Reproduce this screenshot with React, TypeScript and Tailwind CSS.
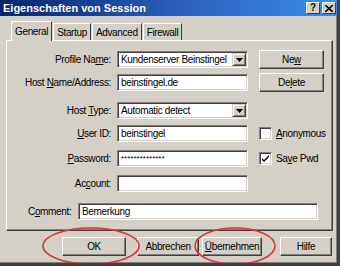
import React from "react";

const font = { fontFamily: '"Liberation Sans", Arial, sans-serif' };

function U({ children }: { children: React.ReactNode }) {
  return <span className="underline underline-offset-1">{children}</span>;
}

function Field({ value, className = "" }: { value?: string; className?: string }) {
  return (
    <div
      className={`h-[17px] bg-white border border-t-[#808080] border-l-[#808080] border-b-white border-r-white shadow-[inset_1px_1px_0_#404040,inset_-1px_-1px_0_#d4d0c8] pl-[3px] leading-[15px] text-black whitespace-nowrap overflow-hidden ${className}`}
    >
      {value}
    </div>
  );
}

function Combo({ value }: { value: string }) {
  return (
    <div className="flex h-[17px] w-[131px] bg-white border border-t-[#808080] border-l-[#808080] border-b-white border-r-white shadow-[inset_1px_1px_0_#404040,inset_-1px_-1px_0_#d4d0c8]">
      <div className="flex-1 pl-[3px] leading-[15px] whitespace-nowrap overflow-hidden">{value}</div>
      <div className="w-[14px] h-[13px] mt-[1px] mr-[1px] flex items-center justify-center bg-[#d4d0c8] border border-t-[#d4d0c8] border-l-[#d4d0c8] border-b-[#404040] border-r-[#404040] shadow-[inset_1px_1px_0_#fff,inset_-1px_-1px_0_#808080]">
        <svg width="7" height="4" viewBox="0 0 7 4">
          <path d="M0 0h7L3.5 4z" fill="#000" />
        </svg>
      </div>
    </div>
  );
}

function Btn({ children, className = "" }: { children: React.ReactNode; className?: string }) {
  return (
    <div
      className={`flex items-center justify-center bg-[#d4d0c8] border border-t-white border-l-white border-b-[#404040] border-r-[#404040] shadow-[inset_-1px_-1px_0_#808080] text-black ${className}`}
    >
      {children}
    </div>
  );
}

function Check({ checked, children }: { checked?: boolean; children: React.ReactNode }) {
  return (
    <div className="flex items-center gap-[4px]">
      <div className="w-[13px] h-[13px] bg-white border border-t-[#808080] border-l-[#808080] border-b-white border-r-white shadow-[inset_1px_1px_0_#404040,inset_-1px_-1px_0_#d4d0c8] flex items-center justify-center">
        {checked && (
          <svg width="9" height="9" viewBox="0 0 9 9">
            <path d="M1 4l2 2 5-5v2l-5 5-2-2z" fill="#000" />
          </svg>
        )}
      </div>
      <span>{children}</span>
    </div>
  );
}

function Row({
  label,
  children,
  right,
  className = "",
}: {
  label: React.ReactNode;
  children: React.ReactNode;
  right?: React.ReactNode;
  className?: string;
}) {
  return (
    <div className={`flex items-center ${className}`}>
      <div className="w-[110px] text-right pr-[6px] whitespace-nowrap">{label}</div>
      {children}
      <div className="ml-[11px]">{right}</div>
    </div>
  );
}

export default function App() {
  return (
    <div
      style={font}
      className="relative w-[340px] h-[266px] overflow-hidden bg-[#d4d0c8] text-black text-[10px] tracking-[-0.35px] border-r-[3px] border-b-[3px] border-r-[#404040] border-b-[#404040] shadow-[inset_-1px_-1px_0_#808080]"
    >
      <div className="h-[16px] flex items-center justify-between bg-gradient-to-r from-[#0a246a] via-[#2a5cb8] to-[#3a8ee6] pl-[3px] pr-[1px]">
        <span className="text-white font-bold text-[11px] tracking-[0px]">Eigenschaften von Session</span>
        <div className="flex gap-[2px]">
          <div className="w-[14px] h-[12px] flex items-center justify-center bg-[#d4d0c8] border border-t-white border-l-white border-b-[#404040] border-r-[#404040] text-[10px] font-bold leading-none">
            ?
          </div>
          <div className="w-[14px] h-[12px] flex items-center justify-center bg-[#d4d0c8] border border-t-white border-l-white border-b-[#404040] border-r-[#404040]">
            <svg width="8" height="7" viewBox="0 0 8 7">
              <path d="M0 0l8 7M8 0L0 7" stroke="#000" strokeWidth="1.6" />
            </svg>
          </div>
        </div>
      </div>

      <div className="pl-[6px] pr-[4px] pt-[4px]">
        <div className="flex items-end pl-[5px] h-[20px]">
          <div className="h-[20px] px-[3px] flex items-center bg-[#d4d0c8] border-t border-l border-r border-t-white border-l-white border-r-[#404040] -mb-[1px] relative z-10">
            General
          </div>
          {["Startup", "Advanced", "Firewall"].map((t) => (
            <div
              key={t}
              className="h-[17px] px-[3px] flex items-center border-t border-l border-r border-t-white border-l-white border-r-[#404040] ml-[1px]"
            >
              {t}
            </div>
          ))}
        </div>
        <div className="h-[191px] border border-t-white border-l-white border-b-[#404040] border-r-[#404040] shadow-[inset_-1px_-1px_0_#808080] pt-[10px]">
          <Row
            label={<>Profile Na<U>m</U>e:</>}
            right={<Btn className="w-[65px] h-[19px] -my-[1px]">Ne<U>w</U></Btn>}
          >
            <Combo value="Kundenserver Beinstingel" />
          </Row>
          <Row
            className="mt-[6px]"
            label={<>Host <U>N</U>ame/Address:</>}
            right={<Btn className="w-[65px] h-[19px] -my-[1px]">De<U>l</U>ete</Btn>}
          >
            <Field value="beinstingel.de" className="w-[131px]" />
          </Row>
          <Row className="mt-[11px]" label={<>Host <U>T</U>ype:</>}>
            <Combo value="Automatic detect" />
          </Row>
          <Row
            className="mt-[6px]"
            label={<><U>U</U>ser ID:</>}
            right={<Check><U>A</U>nonymous</Check>}
          >
            <Field value="beinstingel" className="w-[131px]" />
          </Row>
          <Row
            className="mt-[8px]"
            label={<><U>P</U>assword:</>}
            right={<Check checked>Sa<U>v</U>e Pwd</Check>}
          >
            <Field value="**************" className="w-[131px] text-[8px] tracking-[0px]" />
          </Row>
          <Row className="mt-[8px]" label={<>Ac<U>c</U>ount:</>}>
            <Field className="w-[131px]" />
          </Row>
          <div className="flex items-center mt-[11px] pl-[21px]">
            <span className="w-[50px]">C<U>o</U>mment:</span>
            <Field value="Bemerkung" className="w-[240px]" />
          </div>
        </div>
        <div className="flex mt-[6px] pl-[56px]">
          <Btn className="w-[64px] h-[19px]">OK</Btn>
          <Btn className="w-[62px] h-[19px] ml-[11px]">Abbrechen</Btn>
          <Btn className="w-[60px] h-[19px] ml-[3px]"><U>Ü</U>bernehmen</Btn>
          <Btn className="w-[52px] h-[19px] ml-[18px]">Hilfe</Btn>
        </div>
      </div>

      <svg className="absolute left-0 top-0 pointer-events-none" width="340" height="266">
        <ellipse cx="91" cy="246" rx="48" ry="18" fill="none" stroke="#d83838" strokeWidth="1.6" />
        <ellipse cx="235" cy="246" rx="40" ry="18" fill="none" stroke="#d83838" strokeWidth="1.6" />
      </svg>
    </div>
  );
}
